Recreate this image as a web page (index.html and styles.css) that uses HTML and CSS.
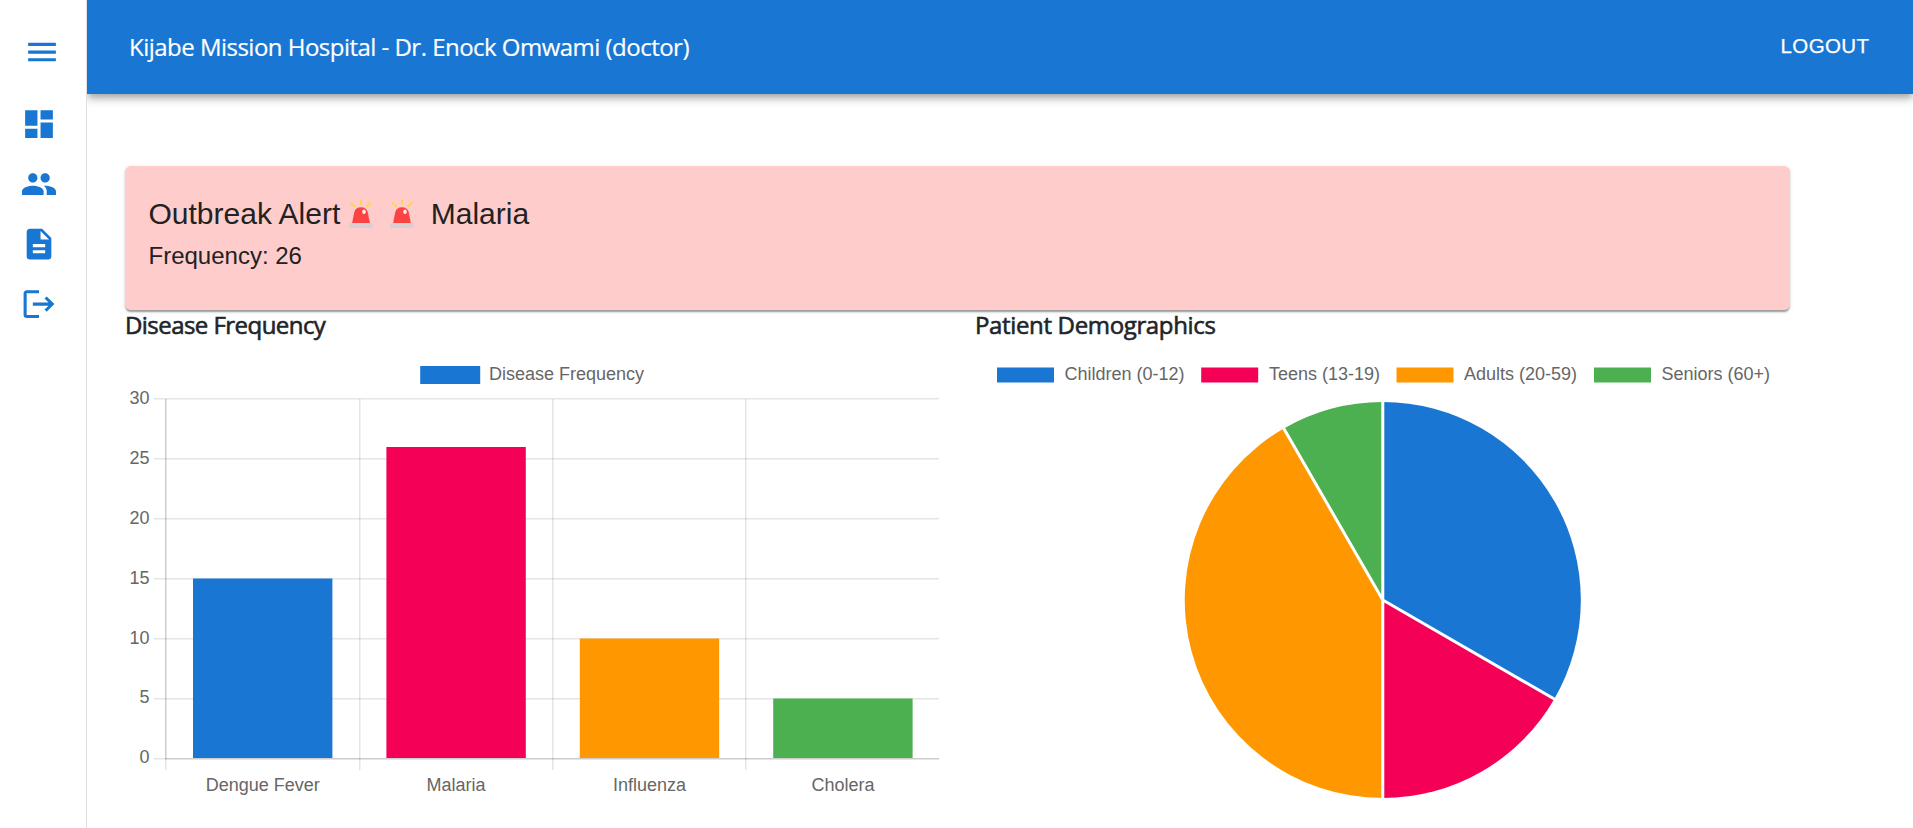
FILE: index.html
```html
<!DOCTYPE html>
<html lang="en">
<head>
<meta charset="utf-8">
<title>Kijabe Mission Hospital</title>
<link rel="stylesheet" href="styles.css">
</head>
<body>
<div class="app">
  <nav class="sidebar">
    <svg class="icon icon-menu" viewBox="0 0 24 24"><path d="M3 18h18v-2H3zm0-5h18v-2H3zm0-7v2h18V6z"/></svg>
    <svg class="icon" viewBox="0 0 24 24"><path d="M3 13h8V3H3zm0 8h8v-6H3zm10 0h8V11h-8zm0-18v6h8V3z"/></svg>
    <svg class="icon" viewBox="0 0 24 24"><path d="M16 11c1.66 0 2.99-1.34 2.99-3S17.66 5 16 5s-3 1.34-3 3 1.34 3 3 3m-8 0c1.66 0 2.99-1.34 2.99-3S9.66 5 8 5 5 6.34 5 8s1.34 3 3 3m0 2c-2.33 0-7 1.17-7 3.5V19h14v-2.500c0-2.330-4.670-3.500-7-3.500m8 0c-.29 0-.62.02-.97.05 1.160.840 1.970 1.970 1.970 3.450V19h6v-2.500c0-2.330-4.670-3.500-7-3.500"/></svg>
    <svg class="icon" viewBox="0 0 24 24"><path d="M14 2H6c-1.100 0-1.990.9-1.990 2L4 20c0 1.100.890 2 1.990 2H18c1.100 0 2-.9 2-2V8zm2 16H8v-2h8zm0-4H8v-2h8zm-3-5V3.500L18.500 9z"/></svg>
    <svg class="icon" viewBox="0 0 24 24"><path d="m17 7-1.410 1.410L18.170 11H8v2h10.170l-2.580 2.580L17 17l5-5zM4 5h8V3H4c-1.100 0-2 .9-2 2v14c0 1.100.9 2 2 2h8v-2H4z"/></svg>
  </nav>
  <div class="page">
    <header class="appbar">
      <span class="brand">Kijabe Mission Hospital - Dr. Enock Omwami (doctor)</span>
      <span class="logout">LOGOUT</span>
    </header>
    <main class="content">
      <section class="alert">
        <div class="alert-title">
          <span>Outbreak Alert</span>
          <svg class="siren" viewBox="0 0 24 30"><g stroke="#ffd54a" stroke-width="2" stroke-linecap="round"><path d="M12 1v4M2.300 4l3.700 3.300M21.700 4L18 7.300"/></g><path d="M3 24.500L5.300 13Q6.500 8.300 12 8.300T18.700 13L21 24.500z" fill="#fc4343"/><ellipse cx="15" cy="12.700" rx="1.800" ry="2.200" fill="#fff0ee"/><rect x=".3" y="24" width="23.400" height="5" rx="1" fill="#d7cfd1"/></svg>
          <svg class="siren" viewBox="0 0 24 30"><g stroke="#ffd54a" stroke-width="2" stroke-linecap="round"><path d="M12 1v4M2.300 4l3.700 3.300M21.700 4L18 7.300"/></g><path d="M3 24.500L5.300 13Q6.500 8.300 12 8.300T18.700 13L21 24.500z" fill="#fc4343"/><ellipse cx="15" cy="12.700" rx="1.800" ry="2.200" fill="#fff0ee"/><rect x=".3" y="24" width="23.400" height="5" rx="1" fill="#d7cfd1"/></svg>
          <span class="disease">Malaria</span>
        </div>
        <div class="alert-count">Frequency: 26</div>
      </section>
      <div class="charts">
        <section class="chart">
          <h2 class="chart-title title-bar">Disease Frequency</h2>
          <svg class="plot" viewBox="125 350 820 460" width="820" height="460">
            <rect x="420.200" y="366" width="60" height="18" fill="#1976d2"/>
            <text class="label" x="489" y="380">Disease Frequency</text>
            <g fill="#000" fill-opacity=".1">
              <rect x="154" y="398" width="785" height="1.500"/><rect x="154" y="458" width="785" height="1.500"/><rect x="154" y="518" width="785" height="1.500"/><rect x="154" y="578" width="785" height="1.500"/><rect x="154" y="638" width="785" height="1.500"/><rect x="154" y="698" width="785" height="1.500"/><rect x="154" y="758" width="785" height="1.500"/>
              <rect x="165" y="399" width="1.500" height="371"/><rect x="359" y="399" width="1.500" height="371"/><rect x="552" y="399" width="1.500" height="371"/><rect x="745" y="399" width="1.500" height="371"/>
              <rect x="165" y="399" width="1.500" height="360"/><rect x="165" y="758" width="774" height="1.500"/>
            </g>
            <rect x="193" y="578.500" width="139.400" height="179.500" fill="#1976d2"/>
            <rect x="386.400" y="447" width="139.400" height="311" fill="#f50057"/>
            <rect x="579.800" y="638.500" width="139.400" height="119.500" fill="#ff9800"/>
            <rect x="773.200" y="698.500" width="139.400" height="59.500" fill="#4caf50"/>
            <g class="label end">
              <text x="149.500" y="404">30</text><text x="149.500" y="464">25</text><text x="149.500" y="524">20</text><text x="149.500" y="584">15</text><text x="149.500" y="644">10</text><text x="149.500" y="703">5</text><text x="149.500" y="763">0</text>
            </g>
            <g class="label mid">
              <text x="262.700" y="791">Dengue Fever</text><text x="456" y="791">Malaria</text><text x="649.500" y="791">Influenza</text><text x="843" y="791">Cholera</text>
            </g>
          </svg>
        </section>
        <section class="chart">
          <h2 class="chart-title title-pie">Patient Demographics</h2>
          <svg class="plot" viewBox="975 350 815 460" width="815" height="460">
            <rect x="997" y="367.500" width="57" height="15" fill="#1976d2"/>
            <rect x="1201.200" y="367.500" width="57" height="15" fill="#f50057"/>
            <rect x="1396.500" y="367.500" width="57" height="15" fill="#ff9800"/>
            <rect x="1594" y="367.500" width="57" height="15" fill="#4caf50"/>
            <g class="label">
              <text x="1064.500" y="380">Children (0-12)</text><text x="1269" y="380">Teens (13-19)</text><text x="1464" y="380">Adults (20-59)</text><text x="1661.500" y="380">Seniors (60+)</text>
            </g>
            <path d="M1382.800 600V402A198 198 0 0 1 1554.300 699z" fill="#1976d2"/>
            <path d="M1382.800 600L1554.300 699A198 198 0 0 1 1382.800 798z" fill="#f50057"/>
            <path d="M1382.800 600V798A198 198 0 0 1 1283.800 428.500z" fill="#ff9800"/>
            <path d="M1382.800 600L1283.800 428.500A198 198 0 0 1 1382.800 402z" fill="#4caf50"/>
            <path d="M1382.800 400V800M1382.800 600L1556 700M1382.800 600L1282.800 426.800" fill="none" stroke="#fff" stroke-width="3"/>
          </svg>
        </section>
      </div>
    </main>
  </div>
</div>
</body>
</html>
```

FILE: styles.css
```css
* { box-sizing: border-box; }
body { margin: 0; background: #fff; overflow: hidden; font-family: "Liberation Sans", Arial, sans-serif; }
.app { display: flex; height: 828px; }
.sidebar { width: 87px; flex: none; border-right: 1px solid #e0e0e0; display: flex; flex-direction: column; align-items: flex-start; gap: 23px; padding: 33px 0 0 20px; }
.icon { width: 37px; height: 37px; fill: #1976d2; flex: none; transform: translate(.5px, .6px); }
.icon-menu { margin: 0 0 12px 3px; }
.page { flex: 1; min-width: 0; overflow: hidden; }
.appbar { height: 94px; background: #1976d2; color: #fff; display: flex; justify-content: space-between; padding: 0 43.5px 0 42px; box-shadow: 0 3px 6px -1.5px rgba(0,0,0,.2), 0 6px 7.500px rgba(0,0,0,.14), 0 1.500px 15px rgba(0,0,0,.12); }
.brand { font: 400 24px/94px "Open Sans", "Noto Sans", sans-serif; letter-spacing: -.52px; -webkit-text-stroke: .2px #fff; white-space: nowrap; }
.logout { font-size: 20.500px; line-height: 91px; letter-spacing: .4px; -webkit-text-stroke: .25px #fff; }
.content { padding: 72px 123px 0 38px; }
.alert { height: 144px; border-radius: 6px; background: #ffcccc; color: #222; padding: 28px 24px 0 23.5px; box-shadow: 0 3px 1.500px -1.500px rgba(0,0,0,.2), 0 1.500px 1.500px rgba(0,0,0,.14), 0 1.500px 4.500px rgba(0,0,0,.12); }
.alert-title { display: flex; font-size: 30px; line-height: 40px; white-space: pre; }
.siren { width: 24px; height: 30px; margin: 5px 0 0 9px; }
.siren + .siren { margin-left: 17px; }
.disease { margin-left: 16.5px; }
.alert-count { font-size: 24px; line-height: 36px; margin-top: 4px; }
.charts { display: grid; grid-template-columns: 850px 815px; }
.chart-title { margin: 0; height: 40px; font: 400 24px/30px "Open Sans", "Noto Sans", sans-serif; color: #212529; -webkit-text-stroke: .6px #212529; white-space: nowrap; }
.title-bar { letter-spacing: -.55px; }
.title-pie { letter-spacing: -.35px; }
.plot { display: block; }
.label { font: 18px "Liberation Sans", Arial, sans-serif; fill: #666; }
.end { text-anchor: end; }
.mid { text-anchor: middle; }
```
